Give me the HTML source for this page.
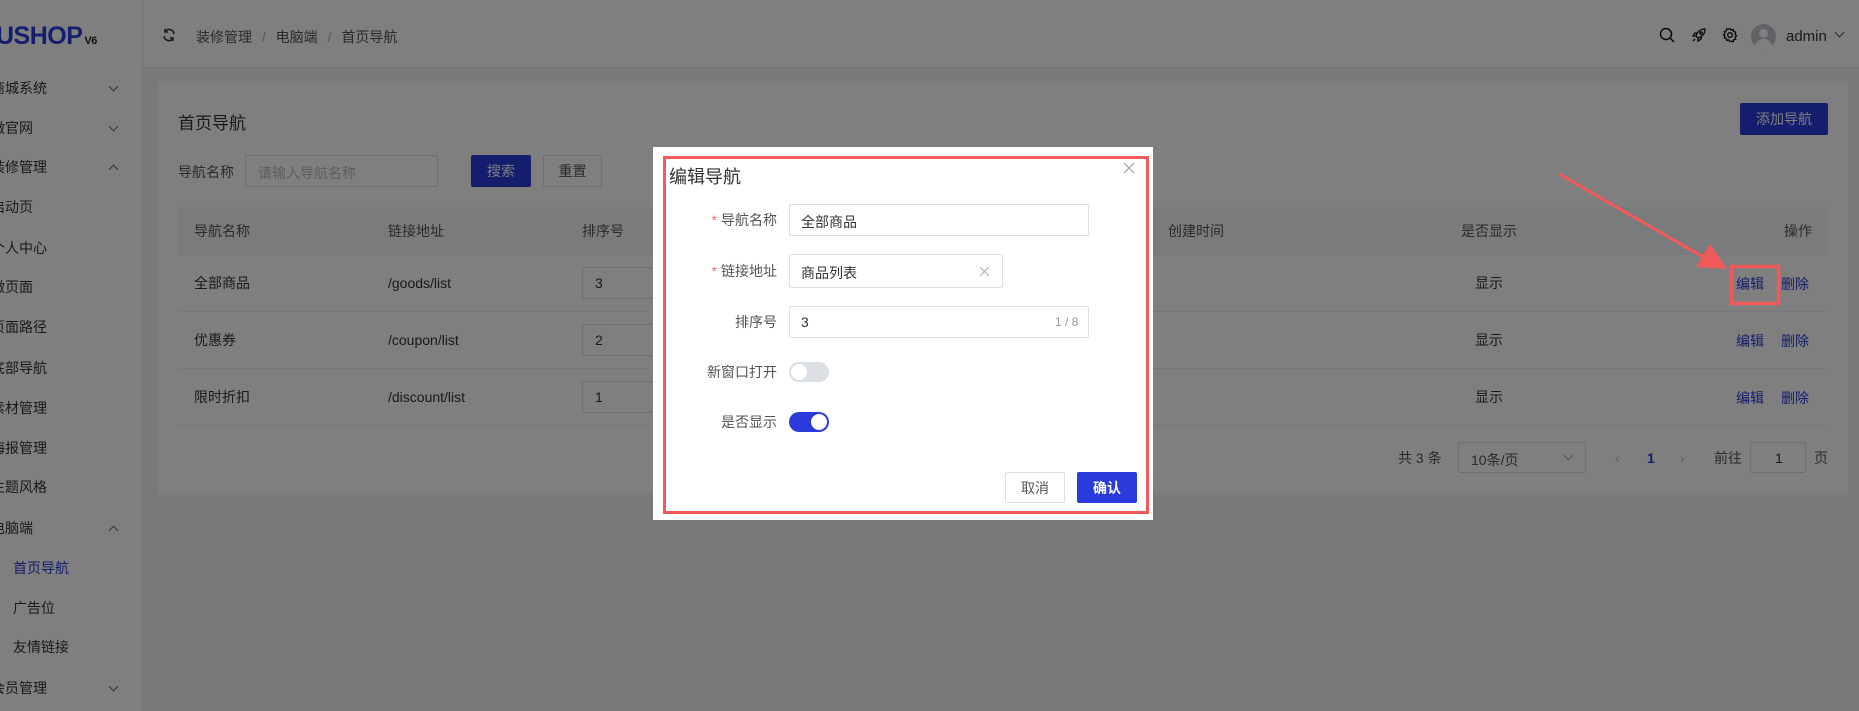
<!DOCTYPE html>
<html><head><meta charset="utf-8"><style>
*{box-sizing:border-box;margin:0;padding:0}
body{width:1859px;height:711px;overflow:hidden;position:relative;background:#f0f2f5;font-family:"Liberation Sans","Noto Sans CJK SC",sans-serif;font-size:14px;color:#333}
.a{position:absolute;white-space:nowrap}
.side{position:absolute;left:0;top:0;width:143px;height:711px;background:#fff;border-right:1px solid #e8e8e8;overflow:hidden}
.side .it{position:absolute;left:-9px;font-size:14px;color:#333;transform:translateY(-50%)}
.chev{position:absolute;left:110px;width:7px;height:7px;border-right:1.3px solid #666;border-bottom:1.3px solid #666}
.hdr{position:absolute;left:143px;top:3px;right:0;height:65px;background:#fff;border-bottom:1px solid #e6e9ee}
.card{position:absolute;left:158px;top:83px;width:1690px;height:410px;background:#fff}
.btn{position:absolute;font-size:14px;display:flex;align-items:center;justify-content:center;border-radius:2px}
.inp{position:absolute;border:1px solid #dcdfe6;background:#fff;border-radius:2px}
.th{position:absolute;top:207px;height:48px;left:178px;width:1650px;background:#f5f7fa;border-bottom:1px solid #ebeef5}
.row{position:absolute;left:178px;width:1650px;border-bottom:1px solid #ebeef5}
.c{position:absolute;transform:translateY(-50%);font-size:14px}
.blue{color:#2a3adb}
.ov{position:absolute;left:0;top:0;width:1859px;height:711px;background:rgba(0,0,0,.5)}
.modal{position:absolute;left:653px;top:147px;width:500px;height:373px;background:#fff}
.red{position:absolute;left:663px;top:156px;width:486px;height:358px;border:3.5px solid #f25a5a}
.lbl{position:absolute;right:1082px;transform:translateY(-50%);font-size:14px;color:#555;white-space:nowrap}
.req{color:#f56c6c;margin-right:4px}
</style></head><body>
<div style="position:absolute;left:0;top:0;width:1859px;height:3px;background:#fff"></div>
<div class="side">
<div class="a" style="left:-4px;top:22px;font-size:25px;font-weight:bold;color:#2b3ce0;letter-spacing:-0.5px">USHOP<span style="font-size:11px;color:#222;margin-left:2px">V6</span></div>
<div class="it" style="top:88px">商城系统</div><div class="chev" style="top:83px;transform:rotate(45deg)"></div>
<div class="it" style="top:128px">微官网</div><div class="chev" style="top:123px;transform:rotate(45deg)"></div>
<div class="it" style="top:167px">装修管理</div><div class="chev" style="top:166px;transform:rotate(225deg)"></div>
<div class="it" style="top:207px">启动页</div>
<div class="it" style="top:248px">个人中心</div>
<div class="it" style="top:287px">微页面</div>
<div class="it" style="top:327px">页面路径</div>
<div class="it" style="top:368px">底部导航</div>
<div class="it" style="top:408px">素材管理</div>
<div class="it" style="top:448px">海报管理</div>
<div class="it" style="top:487px">主题风格</div>
<div class="it" style="top:528px">电脑端</div><div class="chev" style="top:527px;transform:rotate(225deg)"></div>
<div class="it" style="top:568px;left:13px;color:#2a3adb">首页导航</div>
<div class="it" style="top:608px;left:13px">广告位</div>
<div class="it" style="top:647px;left:13px">友情链接</div>
<div class="it" style="top:688px">会员管理</div><div class="chev" style="top:683px;transform:rotate(45deg)"></div>
</div>
<div class="hdr">
<svg class="a" style="left:19px;top:25px" width="14" height="14" viewBox="0 0 14 14" fill="none" stroke="#333" stroke-width="1.5"><path d="M12 6A5 5 0 0 0 3 3.5M2 8a5 5 0 0 0 9 2.5"/><path d="M3 1v3h3M11 13v-3H8"/></svg>
<div class="a" style="left:53px;top:24px;color:#555">装修管理 <span style="color:#aaa;margin:0 6px">/</span> 电脑端 <span style="color:#aaa;margin:0 6px">/</span> 首页导航</div>
<svg class="a" style="left:1516px;top:24px" width="16" height="16" viewBox="0 0 16 16" fill="none" stroke="#111" stroke-width="1.5"><circle cx="7" cy="7" r="5.5"/><path d="M11 11l4 4"/></svg>
<svg class="a" style="left:1548px;top:24px" width="16" height="16" viewBox="0 0 16 16" fill="none" stroke="#111" stroke-width="1.3"><path d="M14 2C9 2 6 5 5 9l2 2c4-1 7-4 7-9z"/><circle cx="10" cy="6" r="1.2"/><path d="M5 9H2l2-3h3M7 11v3l3-2V9M4 12l-2 2"/></svg>
<svg class="a" style="left:1579px;top:24px" width="16" height="16" viewBox="0 0 16 16" fill="none" stroke="#111" stroke-width="1.3"><circle cx="8" cy="8" r="2.3"/><path d="M8 1.5l1.3 1.6 2-.6.4 2 2 .7-.6 2 1.4 1.5-1.4 1.5.6 2-2 .6-.4 2-2-.5L8 14.5l-1.3-1.6-2 .5-.4-2-2-.6.6-2L1.5 8l1.4-1.5-.6-2 2-.7.4-2 2 .6z"/></svg>
<div class="a" style="left:1608px;top:21px;width:25px;height:25px;border-radius:50%;background:#c0c4cc;overflow:hidden"><div class="a" style="left:8px;top:5px;width:9px;height:9px;border-radius:50%;background:#fff"></div><div class="a" style="left:4px;top:15px;width:17px;height:12px;border-radius:8px 8px 0 0;background:#fff"></div></div>
<div class="a" style="left:1643px;top:25px;font-size:15px;color:#333">admin</div>
<div class="a" style="left:1693px;top:26px;width:7px;height:7px;border-right:1.3px solid #555;border-bottom:1.3px solid #555;transform:rotate(45deg)"></div>
</div>
<div class="card"></div>
<div class="a" style="left:178px;top:109px;font-size:17px;color:#333">首页导航</div>
<div class="btn" style="left:1740px;top:103px;width:88px;height:32px;background:#2a3adb;color:#fff">添加导航</div>
<div class="a" style="left:178px;top:162px;color:#555">导航名称</div>
<div class="inp" style="left:245px;top:155px;width:193px;height:32px"><span class="a" style="left:12px;top:7px;color:#bbb">请输入导航名称</span></div>
<div class="btn" style="left:471px;top:155px;width:60px;height:32px;background:#2a3adb;color:#fff">搜索</div>
<div class="btn" style="left:543px;top:155px;width:59px;height:32px;border:1px solid #dcdfe6;background:#fff;color:#555">重置</div>
<div class="th"></div>
<div class="c" style="left:194px;top:231px;color:#555">导航名称</div>
<div class="c" style="left:388px;top:231px;color:#555">链接地址</div>
<div class="c" style="left:582px;top:231px;color:#555">排序号</div>
<div class="c" style="left:1168px;top:231px;color:#555">创建时间</div>
<div class="c" style="left:1461px;top:231px;color:#555">是否显示</div>
<div class="c" style="left:1784px;top:231px;color:#555">操作</div>
<div class="row" style="top:255px;height:57px"></div>
<div class="row" style="top:312px;height:57px"></div>
<div class="row" style="top:369px;height:57px"></div>
<div class="c" style="left:194px;top:283px">全部商品</div><div class="c" style="left:388px;top:283px">/goods/list</div>
<div class="inp" style="left:582px;top:267px;width:100px;height:32px"><span class="a" style="left:12px;top:7px">3</span></div>
<div class="c" style="left:1475px;top:283px">显示</div>
<div class="c blue" style="left:1736px;top:284px">编辑</div><div class="c blue" style="left:1781px;top:284px">删除</div>
<div class="c" style="left:194px;top:340px">优惠券</div><div class="c" style="left:388px;top:340px">/coupon/list</div>
<div class="inp" style="left:582px;top:324px;width:100px;height:32px"><span class="a" style="left:12px;top:7px">2</span></div>
<div class="c" style="left:1475px;top:340px">显示</div>
<div class="c blue" style="left:1736px;top:341px">编辑</div><div class="c blue" style="left:1781px;top:341px">删除</div>
<div class="c" style="left:194px;top:397px">限时折扣</div><div class="c" style="left:388px;top:397px">/discount/list</div>
<div class="inp" style="left:582px;top:381px;width:100px;height:32px"><span class="a" style="left:12px;top:7px">1</span></div>
<div class="c" style="left:1475px;top:397px">显示</div>
<div class="c blue" style="left:1736px;top:398px">编辑</div><div class="c blue" style="left:1781px;top:398px">删除</div>
<div class="c" style="left:1398px;top:458px;color:#555">共 3 条</div>
<div class="inp" style="left:1458px;top:442px;width:128px;height:31px"><span class="a" style="left:12px;top:7px;color:#555">10条/页</span><span class="a" style="left:106px;top:9px;width:7px;height:7px;border-right:1px solid #aaa;border-bottom:1px solid #aaa;transform:rotate(45deg)"></span></div>
<div class="c" style="left:1615px;top:458px;color:#bbb">‹</div>
<div class="c" style="left:1647px;top:458px;color:#2a3adb;font-weight:bold">1</div>
<div class="c" style="left:1680px;top:458px;color:#bbb">›</div>
<div class="c" style="left:1714px;top:458px;color:#555">前往</div>
<div class="inp" style="left:1750px;top:442px;width:56px;height:31px"><span class="a" style="left:24px;top:7px">1</span></div>
<div class="c" style="left:1814px;top:458px;color:#555">页</div>
<div class="ov"></div>
<svg class="a" style="left:0;top:0" width="1859" height="711"><path d="M1559 174L1705 258" stroke="#f25a5a" stroke-width="3"/><path d="M1727 269L1696 267L1710 244Z" fill="#f25a5a"/><rect x="1731.5" y="266.5" width="47" height="37" fill="none" stroke="#f25a5a" stroke-width="3.5"/></svg>
<div class="modal"></div>
<div class="a" style="left:669px;top:163px;font-size:18px;color:#333">编辑导航</div>
<svg class="a" style="left:1123px;top:162px" width="12" height="12" viewBox="0 0 12 12" stroke="#999" stroke-width="1"><path d="M1 1L11 11M11 1L1 11"/></svg>
<div class="lbl" style="top:220px"><span class="req">*</span>导航名称</div>
<div class="inp" style="left:789px;top:204px;width:300px;height:32px"><span class="a" style="left:11px;top:7px">全部商品</span></div>
<div class="lbl" style="top:271px"><span class="req">*</span>链接地址</div>
<div class="inp" style="left:789px;top:254px;width:214px;height:34px"><span class="a" style="left:11px;top:8px">商品列表</span><svg class="a" style="left:190px;top:12px" width="9" height="9" stroke="#aaa"><path d="M0 0L9 9M9 0L0 9"/></svg></div>
<div class="lbl" style="top:322px">排序号</div>
<div class="inp" style="left:789px;top:306px;width:300px;height:32px"><span class="a" style="left:11px;top:7px">3</span><span class="a" style="left:265px;top:8px;font-size:12px;color:#999">1 / 8</span></div>
<div class="lbl" style="top:372px">新窗口打开</div>
<div class="a" style="left:789px;top:362px;width:40px;height:20px;border-radius:10px;background:#dcdfe6"><div class="a" style="left:2px;top:2px;width:16px;height:16px;border-radius:50%;background:#fff"></div></div>
<div class="lbl" style="top:422px">是否显示</div>
<div class="a" style="left:789px;top:412px;width:40px;height:20px;border-radius:10px;background:#2a3adb"><div class="a" style="left:22px;top:2px;width:16px;height:16px;border-radius:50%;background:#fff"></div></div>
<div class="btn" style="left:1005px;top:472px;width:60px;height:31px;border:1px solid #dcdfe6;color:#555">取消</div>
<div class="btn" style="left:1077px;top:472px;width:60px;height:31px;background:#2a3adb;color:#fff;font-weight:bold">确认</div>
<div class="red"></div>
</body></html>
